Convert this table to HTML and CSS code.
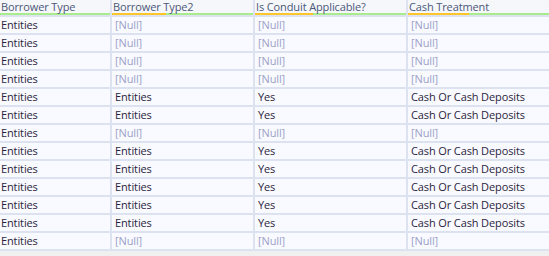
FILE: index.html
```html
<!DOCTYPE html>
<html>
<head>
<meta charset="utf-8">
<link rel="stylesheet" href="styles.css">
</head>
<body>
<div class="grid">
  <div class="hd first" style="--q:0%"><span class="lbl">Borrower Type</span></div>
  <div class="hd" style="--q:38%"><span class="lbl">Borrower Type2</span></div>
  <div class="hd" style="--q:38.5%"><span class="lbl">Is Conduit Applicable?</span></div>
  <div class="hd" style="--q:43%"><span class="lbl">Cash Treatment</span></div>

  <div class="c first">Entities</div><div class="c null">[Null]</div><div class="c null">[Null]</div><div class="c null">[Null]</div>
  <div class="c first">Entities</div><div class="c null">[Null]</div><div class="c null">[Null]</div><div class="c null">[Null]</div>
  <div class="c first">Entities</div><div class="c null">[Null]</div><div class="c null">[Null]</div><div class="c null">[Null]</div>
  <div class="c first">Entities</div><div class="c null">[Null]</div><div class="c null">[Null]</div><div class="c null">[Null]</div>
  <div class="c first">Entities</div><div class="c">Entities</div><div class="c">Yes</div><div class="c">Cash Or Cash Deposits</div>
  <div class="c first">Entities</div><div class="c">Entities</div><div class="c">Yes</div><div class="c">Cash Or Cash Deposits</div>
  <div class="c first">Entities</div><div class="c null">[Null]</div><div class="c null">[Null]</div><div class="c null">[Null]</div>
  <div class="c first">Entities</div><div class="c">Entities</div><div class="c">Yes</div><div class="c">Cash Or Cash Deposits</div>
  <div class="c first">Entities</div><div class="c">Entities</div><div class="c">Yes</div><div class="c">Cash Or Cash Deposits</div>
  <div class="c first">Entities</div><div class="c">Entities</div><div class="c">Yes</div><div class="c">Cash Or Cash Deposits</div>
  <div class="c first">Entities</div><div class="c">Entities</div><div class="c">Yes</div><div class="c">Cash Or Cash Deposits</div>
  <div class="c first">Entities</div><div class="c">Entities</div><div class="c">Yes</div><div class="c">Cash Or Cash Deposits</div>
  <div class="c first">Entities</div><div class="c null">[Null]</div><div class="c null">[Null]</div><div class="c null">[Null]</div>
</div>
</body>
</html>
```
FILE: styles.css
```css
html, body {
  margin: 0;
  padding: 0;
  background: #f0f0f0;
}
body {
  width: 549px;
  height: 256px;
  overflow: hidden;
  font-family: "Open Sans", "Noto Sans", sans-serif;
  font-size: 11px;
  letter-spacing: -0.12px;
}
.grid {
  display: grid;
  grid-template-columns: 110px 141px 151px 141px;
  column-gap: 2px;
  row-gap: 2px;
  background: #dde2f0;
  padding-bottom: 2px;
}
.hd {
  height: 15px;
  box-sizing: border-box;
  padding-left: 1px;
  color: #4b5877;
  background:
    linear-gradient(to right, #ffc62a 0, #ffc62a var(--q), #a8ec8c var(--q), #a8ec8c 100%) left bottom / 100% 2px no-repeat,
    #f6f7fb;
  white-space: nowrap;
}
.lbl {
  display: block;
  line-height: 13px;
}
.c {
  height: 16px;
  line-height: 16px;
  padding-left: 3px;
  background: #f9faff;
  color: #2c1d3c;
  white-space: nowrap;
}
.c.first { padding-left: 1px; }
.null { color: #9da1c6; }
```
